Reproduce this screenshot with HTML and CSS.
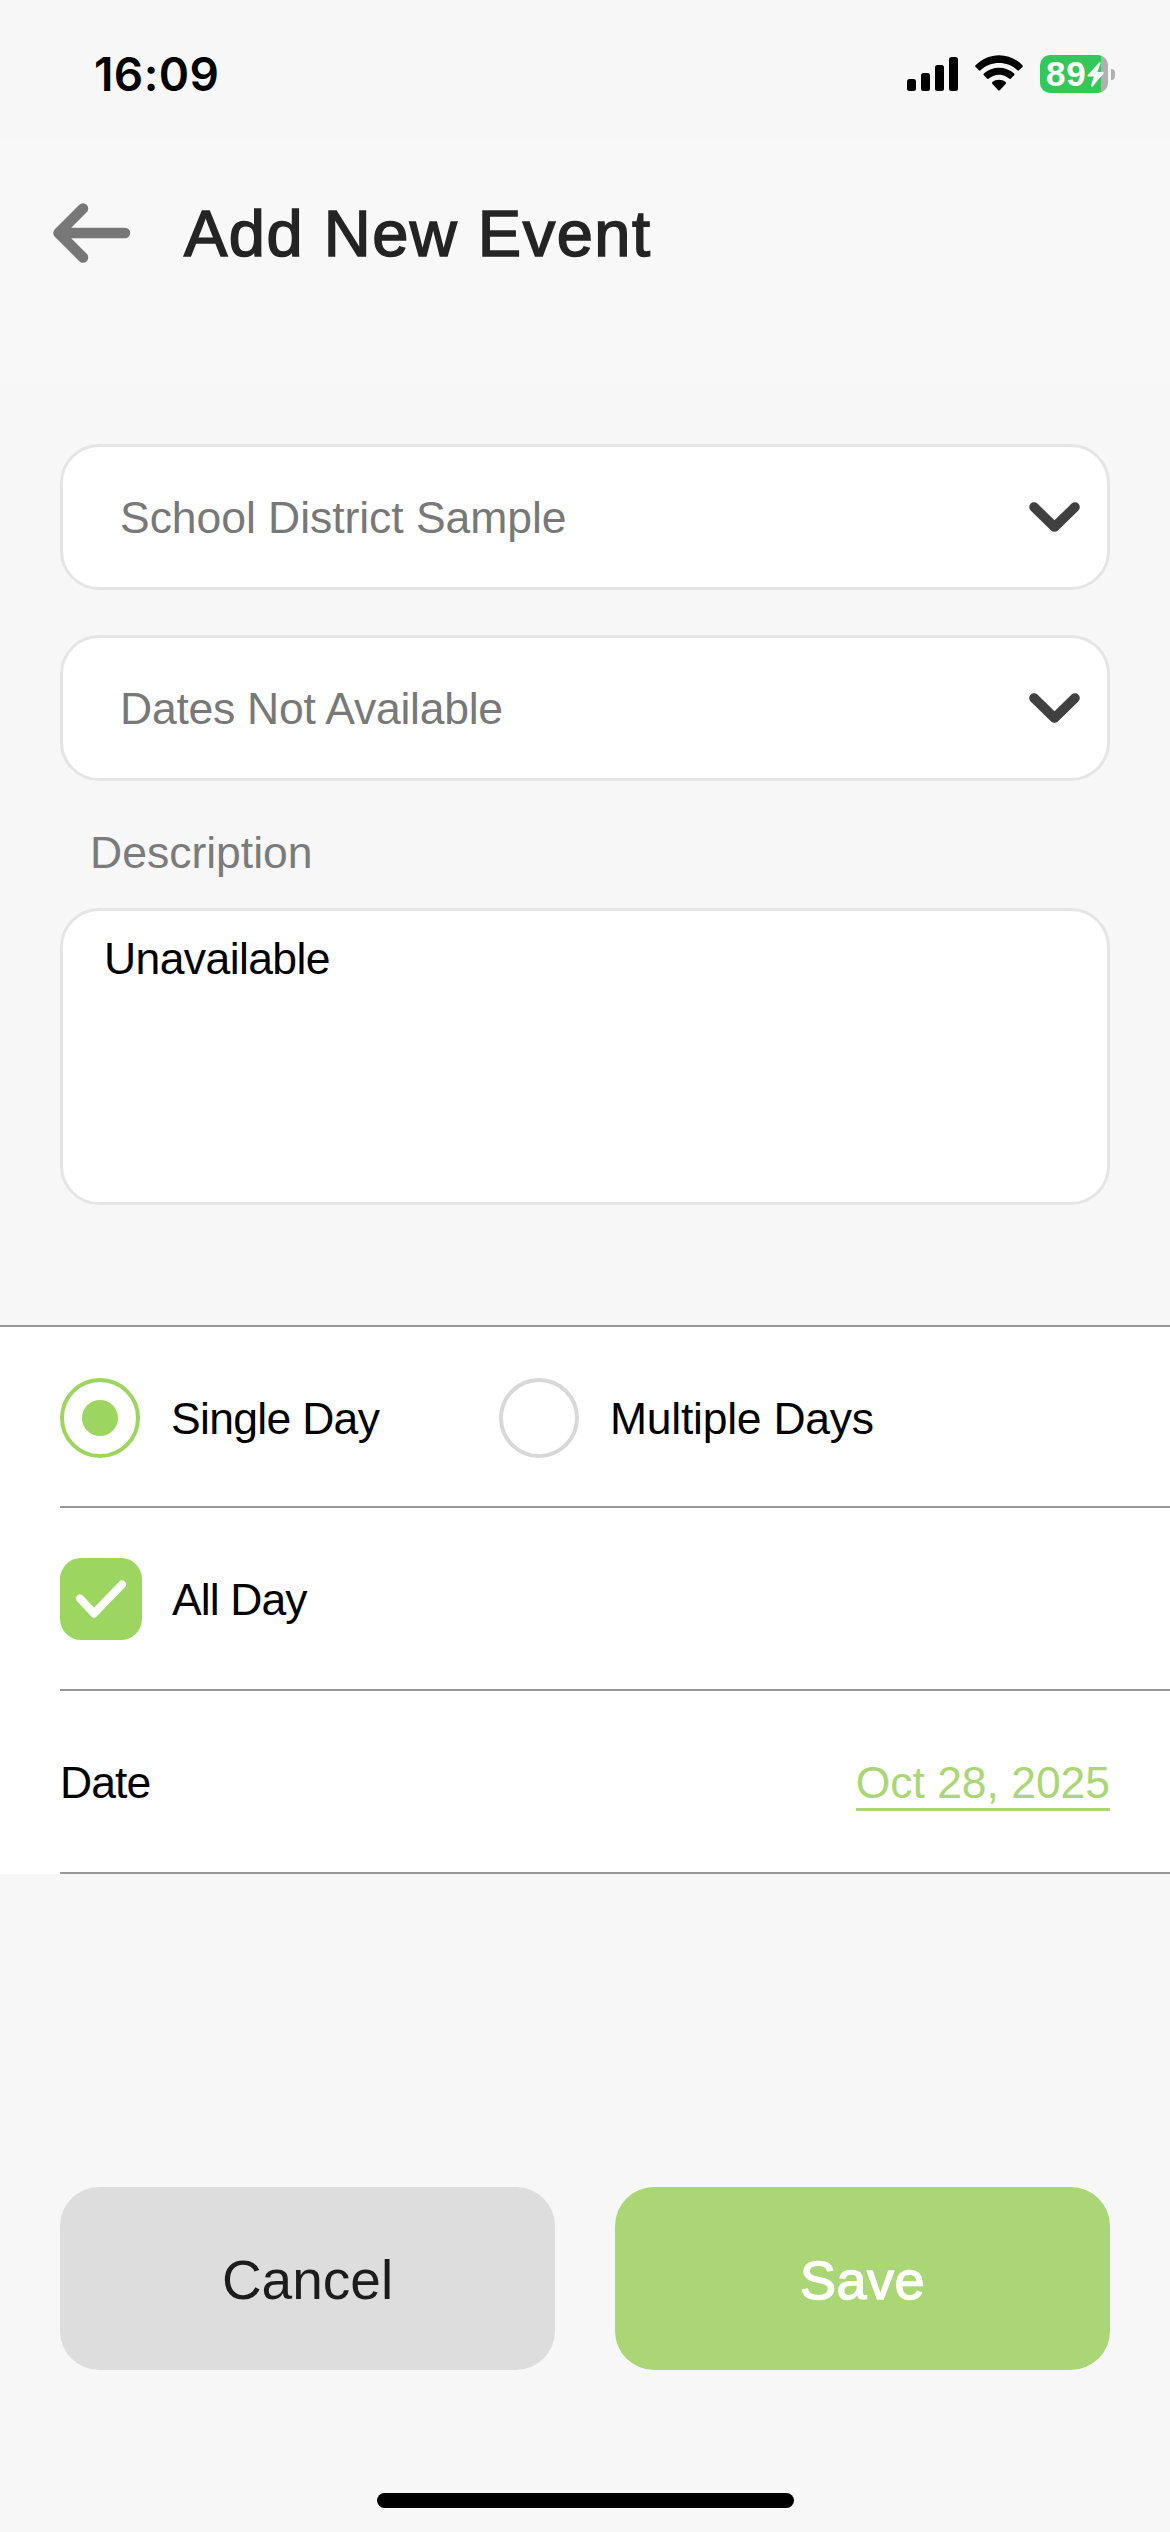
FILE: index.html
```html
<!DOCTYPE html>
<html lang="en">
<head>
<meta charset="utf-8">
<title>Add New Event</title>
<link rel="stylesheet" href="styles.css">
</head>
<body>
<div class="screen">
  <div class="status-bar">
    <span class="time">16:09</span>
    <div class="status-icons">
      <svg class="signal" width="51" height="34" viewBox="0 0 51 34">
        <rect x="0" y="22" width="9" height="12" rx="2.5"/>
        <rect x="14" y="16" width="9" height="18" rx="2.5"/>
        <rect x="28" y="8" width="9" height="26" rx="2.5"/>
        <rect x="42" y="0" width="9" height="34" rx="2.5"/>
      </svg>
      <svg class="wifi" width="48" height="36" viewBox="0 0 48 36">
        <path d="M0.6 10.2Q-0.3 11 0.6 11.9L4 15.3Q4.7 16 5.6 15.2C15.8 5.6 32.2 5.6 42.4 15.2Q43.3 16 44 15.3L47.4 11.9Q48.3 11 47.4 10.2C34.5 -3.2 13.5 -3.2 0.6 10.2Z"/>
        <path d="M8.9 18.6Q8 19.5 8.9 20.3L12.3 23.7Q13 24.4 13.9 23.6C19.6 18.4 28.4 18.4 34.1 23.6Q35 24.4 35.7 23.7L39.1 20.3Q40 19.5 39.1 18.6C30.7 10.7 17.3 10.7 8.9 18.6Z"/>
        <path d="M17.4 27.1Q16.5 28 17.4 28.9L23.2 35.2Q24 36 24.8 35.2L30.6 28.9Q31.5 28 30.6 27.1C26.9 23.9 21.1 23.9 17.4 27.1Z"/>
      </svg>
      <div class="battery">
        <div class="battery-body"><span class="battery-level">89</span>
          <svg width="17" height="25" viewBox="0 0 17 25"><path d="M12.2 0.4L0.6 13.2Q0 14.5 1.4 14.6H6.9L4 23.6Q4 25.4 5.6 24.4L16.6 11.6Q17.2 10.3 15.8 10.1H10.4L13.6 1.3Q13.7 -0.3 12.2 0.4Z"/></svg>
        </div>
        <div class="battery-cap"></div>
      </div>
    </div>
  </div>

  <header class="header">
    <svg class="back" width="78" height="60" viewBox="0 0 78 60">
      <path d="M30 5.5L5.5 30L30 54.5M6 30H72"/>
    </svg>
    <h1 class="title">Add New Event</h1>
  </header>

  <main class="form">
    <div class="select"><span class="select-school">School District Sample</span>
      <svg class="chevron" width="51" height="30" viewBox="0 0 51 30"><path d="M5 5L25.5 25L46 5"/></svg>
    </div>
    <div class="select"><span class="select-type">Dates Not Available</span>
      <svg class="chevron" width="51" height="30" viewBox="0 0 51 30"><path d="M5 5L25.5 25L46 5"/></svg>
    </div>
    <div class="label"><span>Description</span></div>
    <div class="textarea"><span>Unavailable</span></div>
  </main>

  <section class="options">
    <div class="row row-days">
      <div class="choice choice-single"><i class="radio radio-on"></i><span>Single Day</span></div>
      <div class="choice choice-multiple"><i class="radio"></i><span>Multiple Days</span></div>
    </div>
    <div class="row">
      <div class="choice choice-all"><svg class="checkbox" width="82" height="82" viewBox="0 0 82 82"><rect width="82" height="82" rx="21"/><path d="M20 40.5L34 55.5L62 26.5"/></svg><span>All Day</span></div>
    </div>
    <div class="row row-date">
      <span class="date-label">Date</span><span class="date-value">Oct 28, 2025</span>
    </div>
  </section>

  <footer class="actions">
    <div class="button cancel"><span>Cancel</span></div>
    <div class="button save"><span>Save</span></div>
  </footer>
  <div class="home-indicator"></div>
</div>
</body>
</html>
```
FILE: styles.css
```css
* { box-sizing: border-box; }

body {
  margin: 0;
  background: #f7f7f7;
  color: #000;
  font: 44.5px/52px "Liberation Sans", Arial, sans-serif;
}

svg { display: block; flex: none; }

.screen {
  display: flex;
  flex-direction: column;
  width: 1170px;
  height: 2532px;
}

.status-bar {
  display: flex;
  justify-content: space-between;
  height: 139px;
  padding: 48px 55px 0 94px;
}

.time {
  font: 600 46px/53px Inter, sans-serif;
  letter-spacing: 0.4px;
}

.status-icons {
  display: flex;
  align-items: flex-start;
  padding-top: 7px;
}

.signal { margin: 2px 17px 0 0; }
.wifi { margin-right: 17px; }

.battery {
  display: flex;
  align-items: center;
  gap: 3px;
}

.battery-body {
  display: flex;
  align-items: center;
  gap: 1px;
  width: 68px;
  height: 38px;
  padding-left: 6px;
  border-radius: 10px;
  background: linear-gradient(to right, #34c759 61px, #b0b0b0 61px);
}

.battery-body svg { fill: #fff; }

.battery-level {
  width: 40px;
  color: #fff;
  font-size: 35px;
  font-weight: 700;
  line-height: 38px;
  letter-spacing: 0.8px;
}

.battery-cap {
  width: 4px;
  height: 11px;
  border-radius: 0 4px 4px 0;
  background: #b0b0b0;
}

.header {
  display: flex;
  height: 244px;
  padding: 64px 0 0 53px;
  background: #f8f8f8;
}

.back {
  fill: none;
  stroke: #777;
  stroke-width: 10.5;
  stroke-linecap: round;
  stroke-linejoin: round;
}

.title {
  margin: 0 0 0 53px;
  color: #242424;
  font-size: 65px;
  font-weight: 400;
  line-height: 62px;
  letter-spacing: 1.5px;
  -webkit-text-stroke: 1.6px #242424;
}

.form {
  display: flex;
  flex-direction: column;
  height: 942px;
  padding: 61px 60px 0;
}

.select, .textarea {
  border: 3px solid #e5e5e5;
  border-radius: 39px;
  background: #fff;
}

.select {
  display: flex;
  align-items: center;
  justify-content: space-between;
  height: 146px;
  margin-bottom: 45px;
  padding: 0 27px 0 57px;
  color: #787878;
}

.select span { padding-top: 2px; }
.select-school { letter-spacing: -0.05px; }
.select-type { letter-spacing: -0.25px; }

.chevron {
  fill: none;
  stroke: #404040;
  stroke-width: 9.6;
  stroke-linecap: round;
  stroke-linejoin: round;
}

.label {
  height: 82px;
  padding: 1px 0 0 30px;
  color: #7b7b7b;
}

.textarea {
  height: 297px;
  padding: 22px 41px;
  letter-spacing: -0.6px;
}

.options {
  border-top: 2px solid #979797;
  background: #fff;
}

.row {
  display: flex;
  align-items: center;
  height: 183px;
  margin-left: 60px;
  padding-right: 60px;
  border-bottom: 2px solid #979797;
}

.row-days {
  height: 181px;
  padding-top: 3px;
}

.row-date {
  justify-content: space-between;
  padding-top: 1px;
}

.choice {
  display: flex;
  align-items: center;
  gap: 31px;
}

.choice span { padding-top: 2px; }
.choice-single { width: 439px; letter-spacing: -0.7px; }
.choice-multiple { letter-spacing: -0.25px; }
.choice-all { gap: 30px; letter-spacing: -0.9px; }

.radio {
  display: flex;
  align-items: center;
  justify-content: center;
  width: 80px;
  height: 80px;
  border: 4px solid #d8d8d8;
  border-radius: 50%;
}

.radio-on { border-color: #9dd561; }

.radio-on::after {
  content: "";
  width: 36px;
  height: 36px;
  border-radius: 50%;
  background: #9dd561;
}

.checkbox { fill: #9dd561; }

.checkbox path {
  fill: none;
  stroke: #fff;
  stroke-width: 8;
  stroke-linecap: round;
  stroke-linejoin: round;
}

.date-label {
  padding-top: 1px;
  letter-spacing: -0.9px;
}

.date-value {
  height: 55px;
  margin-top: 3px;
  border-bottom: 3px solid #abd676;
  color: #abd676;
  line-height: 54px;
  letter-spacing: -0.05px;
}

.actions {
  display: grid;
  grid-template-columns: 1fr 1fr;
  gap: 60px;
  margin-top: 313px;
  padding: 0 60px;
}

.button {
  display: flex;
  align-items: center;
  justify-content: center;
  height: 183px;
  padding-top: 3px;
  border-radius: 39px;
  font-size: 55px;
}

.cancel {
  background: #ddd;
  color: #1c1c1c;
}

.save {
  background: #abd676;
  color: #fff;
  font-size: 54px;
  letter-spacing: 0.5px;
  -webkit-text-stroke: 1.4px #fff;
}

.home-indicator {
  align-self: center;
  width: 417px;
  height: 15px;
  margin-top: 123px;
  border-radius: 8px;
  background: #000;
}
```
